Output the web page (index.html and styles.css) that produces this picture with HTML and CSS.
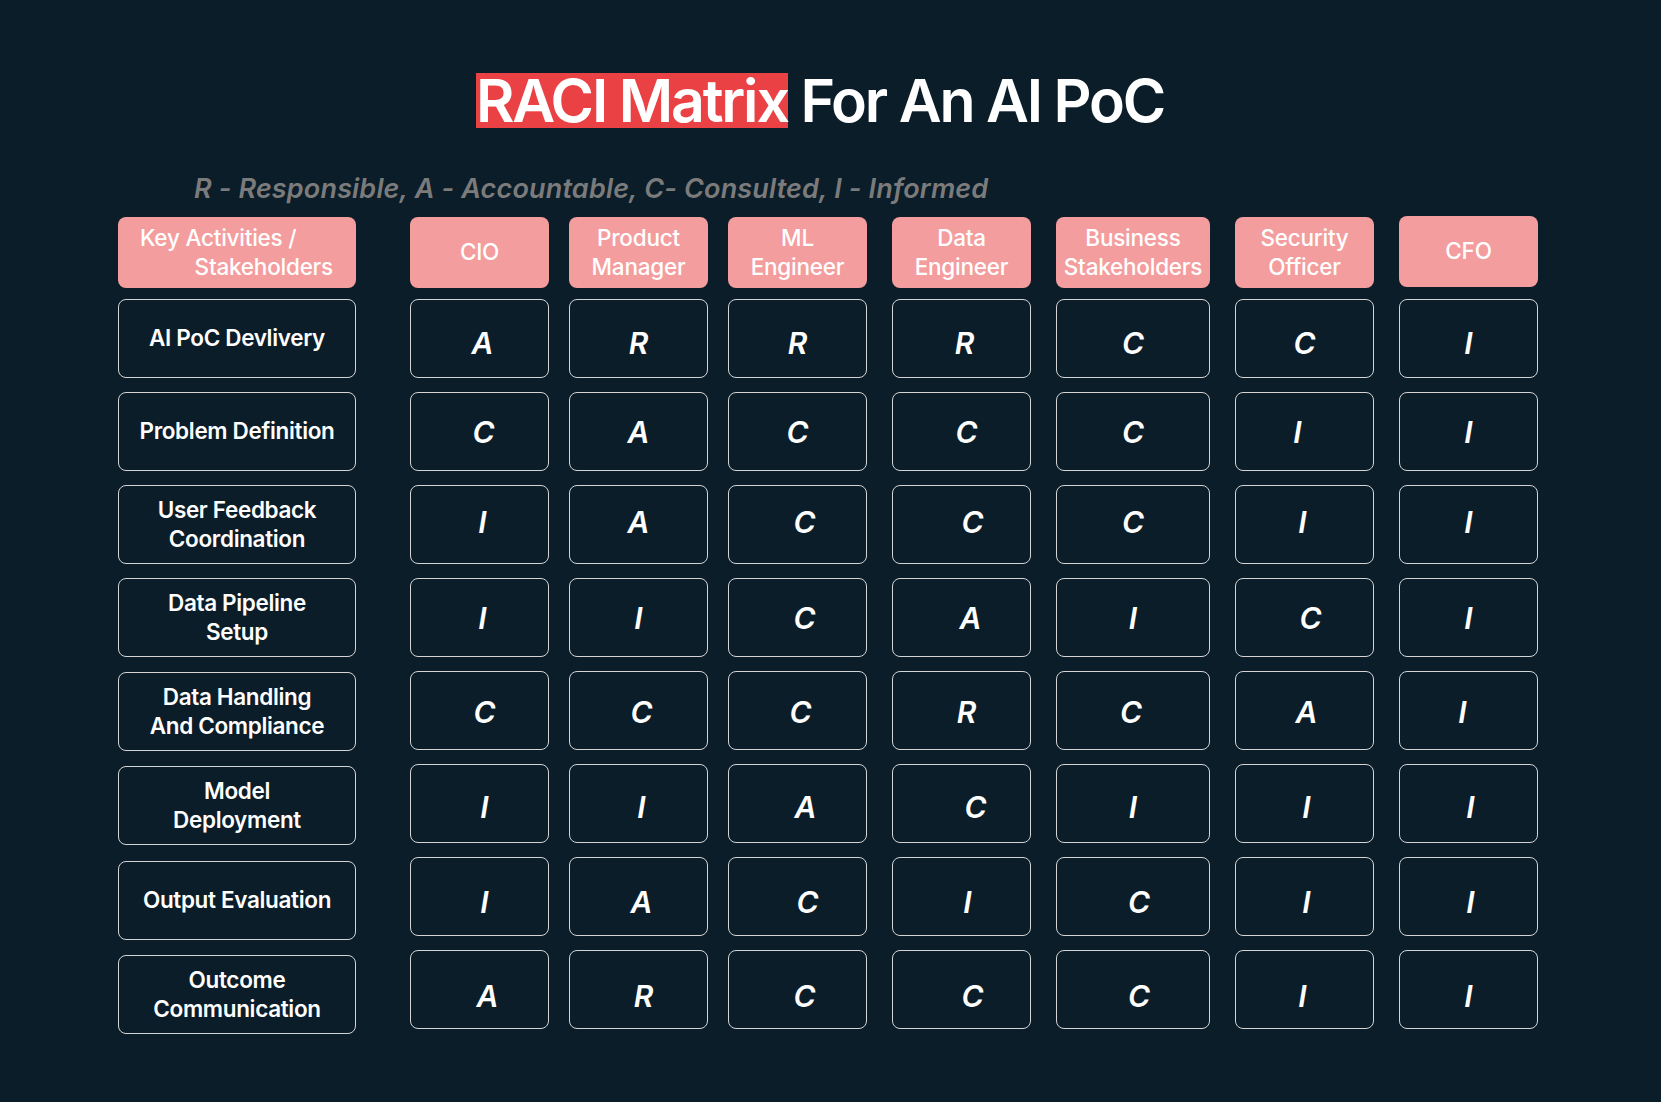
FILE: index.html
```html
<!DOCTYPE html>
<html lang="en">
<head>
<meta charset="utf-8">
<title>RACI Matrix For An AI PoC</title>
<link rel="stylesheet" href="styles.css">
</head>
<body>
<main class="page">
  <h1 class="title"><span class="hl">RACI Matrix</span> For An AI PoC</h1>
  <p class="legend">R - Responsible, A - Accountable, C- Consulted, I - Informed</p>

  <div class="row head">
    <div class="hcell key"><span class="k1">Key Activities /</span><span class="k2">Stakeholders</span></div>
    <div class="hcell">CIO</div>
    <div class="hcell">Product<br>Manager</div>
    <div class="hcell">ML<br>Engineer</div>
    <div class="hcell">Data<br>Engineer</div>
    <div class="hcell wide">Business<br>Stakeholders</div>
    <div class="hcell">Security<br>Officer</div>
    <div class="hcell cfo">CFO</div>
  </div>

  <div class="rows">
    <div class="row r1">
      <div class="label">AI PoC Devlivery</div>
      <div class="cell d3">A</div><div class="cell">R</div><div class="cell">R</div><div class="cell d3">R</div><div class="cell wide">C</div><div class="cell">C</div><div class="cell">I</div>
    </div>
    <div class="row r2">
      <div class="label">Problem Definition</div>
      <div class="cell d4">C</div><div class="cell">A</div><div class="cell">C</div><div class="cell d5">C</div><div class="cell wide">C</div><div class="cell n7">I</div><div class="cell">I</div>
    </div>
    <div class="row r3">
      <div class="label">User Feedback<br>Coordination</div>
      <div class="cell d3">I</div><div class="cell">A</div><div class="cell d7">C</div><div class="cell d11">C</div><div class="cell wide">C</div><div class="cell n2">I</div><div class="cell">I</div>
    </div>
    <div class="row r4">
      <div class="label">Data Pipeline<br>Setup</div>
      <div class="cell d3">I</div><div class="cell">I</div><div class="cell d7">C</div><div class="cell d9">A</div><div class="cell wide">I</div><div class="cell d6">C</div><div class="cell">I</div>
    </div>
    <div class="row r5">
      <div class="label s1">Data Handling<br>And Compliance</div>
      <div class="cell d5">C</div><div class="cell d3">C</div><div class="cell d3">C</div><div class="cell d5">R</div><div class="cell wide n2">C</div><div class="cell d2">A</div><div class="cell n6">I</div>
    </div>
    <div class="row r6">
      <div class="label s2">Model<br>Deployment</div>
      <div class="cell d5">I</div><div class="cell d3">I</div><div class="cell d8">A</div><div class="cell d14">C</div><div class="cell wide">I</div><div class="cell d2">I</div><div class="cell d2">I</div>
    </div>
    <div class="row r7">
      <div class="label s4">Output Evaluation</div>
      <div class="cell d5">I</div><div class="cell d3">A</div><div class="cell d10">C</div><div class="cell d6">I</div><div class="cell wide d6">C</div><div class="cell d2">I</div><div class="cell d2">I</div>
    </div>
    <div class="row r8">
      <div class="label s5">Outcome<br>Communication</div>
      <div class="cell d8">A</div><div class="cell d5">R</div><div class="cell d7">C</div><div class="cell d11">C</div><div class="cell wide d6">C</div><div class="cell n2">I</div><div class="cell">I</div>
    </div>
  </div>
</main>
</body>
</html>
```

FILE: styles.css
```css
html, body {
  margin: 0;
  padding: 0;
  background: #0b1d29;
}

body {
  font-family: Inter, "Noto Sans", "Liberation Sans", sans-serif;
  color: #ffffff;
  min-height: 1102px;
}

.page {
  width: 1422px;
  padding: 73px 0 0 118px;
}

.title {
  margin: 0;
  height: 55px;
  line-height: 55px;
  font-size: 59px;
  font-weight: 600;
  letter-spacing: -0.037em;
  text-align: center;
  padding-right: 18px;
  white-space: nowrap;
}

.hl {
  display: inline-block;
  background: #ea4145;
  line-height: 55px;
}

.legend {
  margin: 45px 0 0 76px;
  font-size: 27px;
  line-height: 32px;
  font-style: italic;
  font-weight: 600;
  color: #7b7b7b;
  letter-spacing: 0.006em;
}

.row {
  display: grid;
  grid-template-columns: 238px 193px 159px 159px 164px 179px 164px 164px;
  grid-template-rows: 79px;
}

.head {
  margin-top: 12px;
  grid-template-rows: 71px;
}

.rows {
  margin-top: 11px;
  display: flex;
  flex-direction: column;
  gap: 14px;
}

.hcell {
  justify-self: end;
  width: 139px;
  height: 71px;
  box-sizing: border-box;
  background: #f49d9e;
  border-radius: 8px;
  display: flex;
  flex-direction: column;
  align-items: center;
  justify-content: center;
  text-align: center;
  font-size: 22.5px;
  line-height: 28.5px;
  font-weight: 500;
  letter-spacing: -0.01em;
  color: #ffffff;
}

.hcell.wide {
  width: 154px;
}

.hcell.cfo {
  margin-top: -1px;
  margin-bottom: 1px;
}

.hcell.key {
  width: 238px;
  align-items: stretch;
}

.k1 {
  text-align: left;
  padding-left: 22px;
}

.k2 {
  text-align: right;
  padding-right: 23px;
}

.label,
.cell {
  justify-self: end;
  height: 79px;
  box-sizing: border-box;
  border: 1px solid #d4d4d4;
  border-radius: 8px;
  display: flex;
  align-items: center;
  justify-content: center;
  text-align: center;
}

.label {
  width: 238px;
  font-size: 22.5px;
  line-height: 28.5px;
  font-weight: 600;
  letter-spacing: -0.015em;
}

.cell {
  width: 139px;
  font-size: 30px;
  line-height: 30px;
  font-weight: 600;
  font-style: italic;
}

.cell.wide {
  width: 154px;
}

/* vertical placement of the letter per row */
.r1 .cell { padding-top: 8px; }
.r2 .cell { padding-top: 0; }
.r3 .cell { padding-bottom: 6px; }
.r4 .cell { padding-top: 0; }
.r5 .cell { padding-top: 2px; }
.r6 .cell { padding-top: 6px; }
.r7 .cell { padding-top: 10px; }
.r8 .cell { padding-top: 12px; }

/* horizontal nudges of the letter */
.d2 { padding-left: 4px; }
.d3 { padding-left: 6px; }
.d4 { padding-left: 8px; }
.d5 { padding-left: 10px; }
.d6 { padding-left: 12px; }
.d7 { padding-left: 14px; }
.d8 { padding-left: 16px; }
.d9 { padding-left: 18px; }
.d10 { padding-left: 20px; }
.d11 { padding-left: 22px; }
.d14 { padding-left: 28px; }
.n2 { padding-right: 4px; }
.n6 { padding-right: 12px; }
.n7 { padding-right: 14px; }

/* slight drift of the label boxes */
.s1 { margin-top: 1px; margin-bottom: -1px; }
.s2 { margin-top: 2px; margin-bottom: -2px; }
.s4 { margin-top: 4px; margin-bottom: -4px; }
.s5 { margin-top: 5px; margin-bottom: -5px; }
```
